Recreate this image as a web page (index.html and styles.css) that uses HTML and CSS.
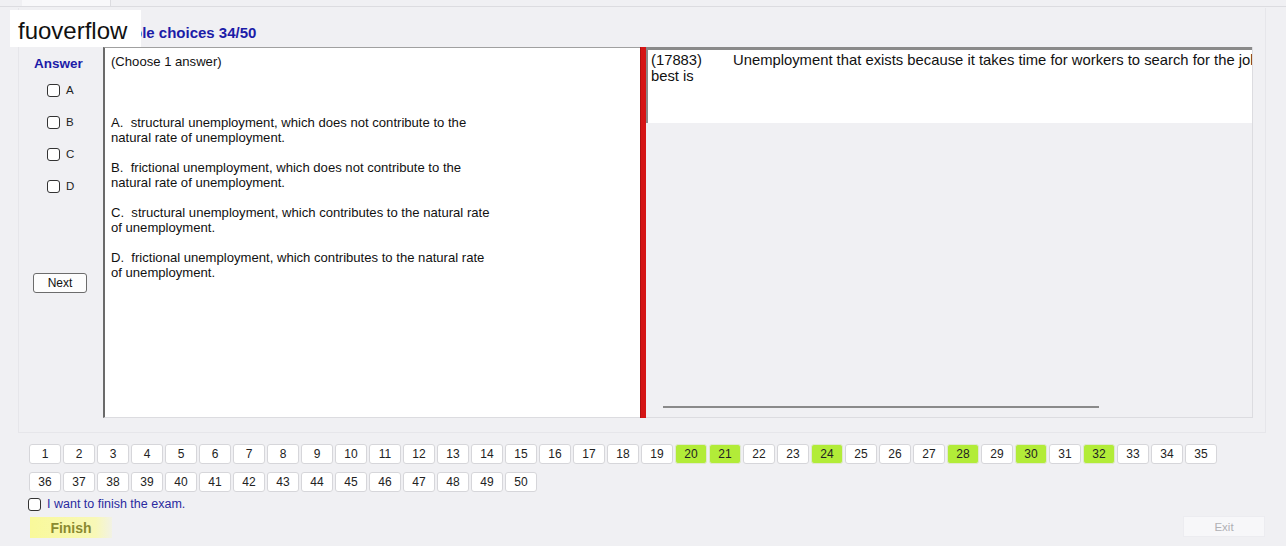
FILE: index.html
```html
<!DOCTYPE html>
<html lang="en">
<head>
    <meta charset="UTF-8">
    <title>Multiple choices 34/50</title>
    <link rel="stylesheet" href="styles.css">
</head>
<body>
    <div class="tabbar">
        <div class="tab"></div>
    </div>

    <div class="main">
        <div class="title">Multiple choices 34/50</div>
        <div class="work">
            <div class="answer-col">
                <div class="answer-head">Answer</div>
                <label class="opt"><input type="checkbox"> A</label>
                <label class="opt"><input type="checkbox"> B</label>
                <label class="opt"><input type="checkbox"> C</label>
                <label class="opt"><input type="checkbox"> D</label>
                <button class="next">Next</button>
            </div>

            <div class="choices">
                <p class="hint">(Choose 1 answer)</p>
                <p>A.&nbsp; structural unemployment, which does not contribute to the<br>natural rate of unemployment.</p>
                <p>B.&nbsp; frictional unemployment, which does not contribute to the<br>natural rate of unemployment.</p>
                <p>C.&nbsp; structural unemployment, which contributes to the natural rate<br>of unemployment.</p>
                <p>D.&nbsp; frictional unemployment, which contributes to the natural rate<br>of unemployment.</p>
            </div>

            <div class="splitter"></div>

            <div class="question-pane">
                <div class="question">
                    <div class="q-line"><span class="q-id">(17883)</span>Unemployment that exists because it takes time for workers to search for the jobs that suit them<br>best is</div>
                </div>
                <div class="pane-rest">
                    <div class="hscroll"></div>
                </div>
            </div>
        </div>
    </div>

    <div class="nav">
        <div class="nav-row" id="row1"></div>
        <div class="nav-row" id="row2"></div>
    </div>

    <label class="finish-check"><input type="checkbox"> I want to finish the exam.</label>

    <div class="footer">
        <button class="finish">Finish</button>
        <button class="exit">Exit</button>
    </div>

    <div class="watermark">fuoverflow</div>

    <script>
        // Nút câu hỏi đã trả lời
        const answered = [20, 21, 24, 28, 30, 32];
        for (let i = 1; i <= 50; i++) {
            const b = document.createElement('button');
            b.className = answered.includes(i) ? 'qbtn done' : 'qbtn';
            b.textContent = i;
            document.getElementById(i <= 35 ? 'row1' : 'row2').appendChild(b);
        }
    </script>
</body>
</html>
```

FILE: styles.css
```css
body {
    margin: 0;
    background: #f0f0f3;
    font-family: 'Liberation Sans', Arial, sans-serif;
    font-size: 12px;
    color: #111;
    width: 1286px;
    height: 546px;
    overflow: hidden;
    position: relative;
}
.tabbar {
    height: 6px;
    border-bottom: 1px solid #dcdce0;
    padding-left: 22px;
}
.tab {
    width: 88px;
    height: 6px;
    background: #f8f8fa;
    border-right: 1px solid #dcdce0;
}
.main {
    margin: 1px 20px 0 18px;
    border: 1px solid #e6e6ea;
    border-top: none;
    padding-bottom: 14px;
}
.title {
    height: 39px;
    box-sizing: border-box;
    padding: 16px 0 0 79px;
    font-size: 15px;
    font-weight: bold;
    color: #1c1ca8;
}
.work {
    display: flex;
    height: 371px;
}
.answer-col {
    width: 84px;
    display: flex;
    flex-direction: column;
    align-items: flex-start;
}
.answer-head {
    font-size: 13.5px;
    font-weight: bold;
    color: #1c1ca8;
    margin: 9px 0 10px 15px;
}
.opt {
    display: flex;
    align-items: center;
    gap: 6px;
    height: 32px;
    margin-left: 28px;
    margin-top: -7px;
    margin-bottom: 7px;
    font-size: 11.5px;
    color: #222;
}
.opt input, .finish-check input {
    appearance: none;
    width: 13px;
    height: 13px;
    margin: 0;
    border: 1px solid #333;
    border-radius: 3px;
    background: #fff;
}
.next {
    margin: 64px 0 0 14px;
    width: 54px;
    height: 20px;
    padding: 0;
    background: #fdfdfd;
    border: 1px solid #6c6c6c;
    border-radius: 3px;
    font-family: inherit;
    font-size: 12px;
    color: #111;
}
.choices {
    width: 537px;
    box-sizing: border-box;
    background: #fff;
    border-left: 2px solid #6a6a6a;
    border-top: 1px solid #a0a0a0;
    border-bottom: 1px solid #dcdce0;
    padding: 6px 0 0 6px;
    font-size: 13.1px;
    line-height: 15px;
}
.choices p {
    margin: 0 0 15px;
}
.choices .hint {
    margin-bottom: 46px;
}
.splitter {
    width: 6px;
    background: #d51515;
    border-left: 1px solid #b01010;
    box-sizing: border-box;
}
.question-pane {
    width: 606px;
    display: flex;
    flex-direction: column;
    border-right: 1px solid #dcdce0;
    border-bottom: 1px solid #dcdce0;
}
.question {
    height: 76px;
    box-sizing: border-box;
    background: #fff;
    border-top: 3px solid #8a8a8a;
    border-left: 2px solid #8a8a8a;
    padding: 2px 0 0 3px;
    font-size: 14.8px;
    line-height: 16px;
    overflow: hidden;
}
.q-line {
    white-space: nowrap;
}
.q-id {
    display: inline-block;
    width: 82px;
}
.pane-rest {
    flex: 1;
    display: flex;
    align-items: flex-end;
    padding: 0 0 9px 17px;
}
.hscroll {
    width: 436px;
    height: 2px;
    background: #8a8a8a;
}
.nav {
    padding: 11px 0 0 29px;
}
.nav-row {
    display: flex;
    gap: 2px;
    margin-bottom: 8px;
}
.qbtn {
    width: 32px;
    height: 20px;
    padding: 0;
    background: #fff;
    border: 1px solid #d6d6da;
    border-radius: 3px;
    font-family: inherit;
    font-size: 12px;
    color: #222;
}
.qbtn.done {
    background: #b2ec38;
    border-color: #e0e8d0;
}
.finish-check {
    display: flex;
    align-items: center;
    gap: 6px;
    margin: -4px 0 0 28px;
    font-size: 12.5px;
    color: #2a2aa0;
    height: 16px;
}
.footer {
    display: flex;
    justify-content: space-between;
    padding: 4px 21px 0 30px;
}
.finish {
    width: 82px;
    height: 21px;
    margin-top: 1px;
    padding: 0;
    border: none;
    background: linear-gradient(90deg, #f9f99a, #f8f8b8 80%, #f2f2e4);
    font-family: inherit;
    font-weight: bold;
    font-size: 14px;
    color: #8a8a30;
}
.exit {
    width: 82px;
    height: 21px;
    padding: 0;
    border: 1px solid #ececf0;
    background: #f7f7f9;
    font-family: inherit;
    font-size: 11.5px;
    color: #b0b0b4;
}
.watermark {
    position: absolute;
    left: 10px;
    top: 10px;
    width: 131px;
    height: 37px;
    box-sizing: border-box;
    background: #fff;
    padding: 7px 0 0 8px;
    font-size: 24px;
    color: #111;
}
```
